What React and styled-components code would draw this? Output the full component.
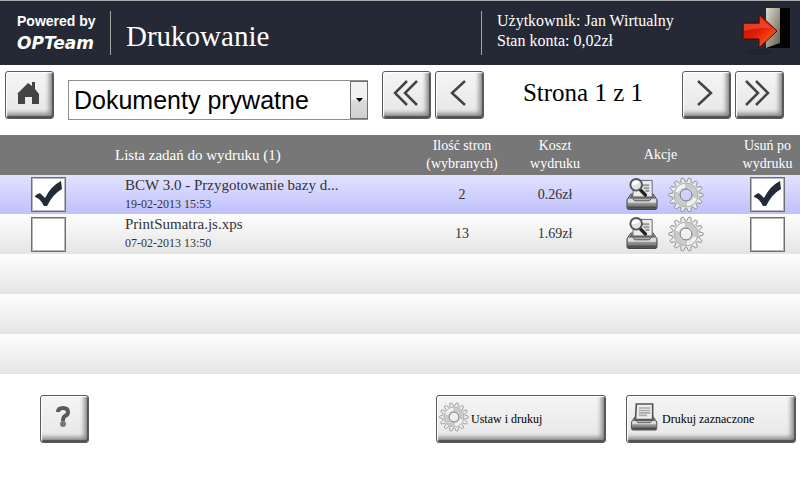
import React, { useState } from "react";
import styled, { createGlobalStyle, css } from "styled-components";

const GlobalStyle = createGlobalStyle`
	* {
		box-sizing: border-box;
	}
	body {
		margin: 0;
		background: #fff;
		color: #000;
		font-family: "Liberation Serif", "Times New Roman", serif;
	}
	button, select {
		font-family: inherit;
		cursor: pointer;
	}
	svg {
		display: block;
	}
`;

const Page = styled.main`
	margin-right: 1px;
`;

const TopBar = styled.header`
	display: flex;
	align-items: center;
	height: 65px;
	padding: 0 8px 0 17px;
	border-top: 1px solid #a9aaac;
	background: #252936;
	color: #fff;
`;

const Brand = styled.div`
	width: 94px;
	height: 44px;
	padding-top: 2px;
	border-right: 1px solid #a5a7a4;
	font: bold 14px/16px "Liberation Sans", Arial, sans-serif;
	white-space: nowrap;
	strong {
		display: block;
		margin-top: 4px;
		font: italic bold 17px/20px "DejaVu Sans", Verdana, sans-serif;
	}
`;

const Title = styled.h1`
	flex: 1;
	margin: 0;
	padding: 6px 0 0 15px;
	font-size: 29px;
	line-height: 32px;
	font-weight: normal;
`;

const Account = styled.div`
	width: 261px;
	height: 44px;
	padding-left: 15px;
	border-left: 1px solid #a5a7a4;
	font-size: 16px;
	line-height: 20px;
`;

const IconButton = styled.button`
	display: flex;
	padding: 0;
	border: 0;
	background: none;
`;

const Toolbar = styled.div`
	display: flex;
	gap: 14px;
	height: 70px;
	padding: 6px 16px 0 5px;
`;

const BevelButton = styled.button`
	display: flex;
	align-items: center;
	justify-content: center;
	width: 49px;
	height: 48px;
	padding: 0 3px 4px 0;
	border: 1px solid #5a5a5a;
	border-radius: 3px;
	background: linear-gradient(#f5f5f5, #e6e6e6);
	box-shadow: inset 1px 1px 1px #fff, inset -1px -2px 1px #505050, inset -4px -5px 4px #909090;
	color: #444;
	${props => props.$wide && css`
		justify-content: flex-start;
		gap: 2px;
		width: 170px;
		padding-left: 2px;
		color: #000;
		font-size: 12px;
		span {
			padding-top: 4px;
		}
	`}
`;

const SelectBox = styled.div`
	position: relative;
	width: 300px;
	height: 40px;
	margin-top: 9px;
	select {
		appearance: none;
		width: 100%;
		height: 100%;
		padding: 0 20px 0 5px;
		border: 1px solid #8e8f8f;
		border-radius: 0;
		background: #fff;
		color: #000;
		font: 25px "Liberation Sans", Arial, sans-serif;
	}
`;

const SelectArrow = styled.span`
	position: absolute;
	top: 1px;
	right: 0;
	bottom: 1px;
	display: flex;
	align-items: center;
	justify-content: center;
	width: 18px;
	border: 1px solid #707070;
	background: linear-gradient(#f2f2f2 50%, #dcdcdc 50%, #d0d0d0);
	pointer-events: none;
`;

const Pager = styled.nav`
	display: flex;
	flex: 1;
	gap: 4px;
`;

const PageLabel = styled.span`
	flex: 1;
	padding-top: 8px;
	font-size: 25px;
	line-height: 28px;
	text-align: center;
	white-space: nowrap;
`;

const JobTable = styled.table`
	width: 100%;
	table-layout: fixed;
	border-collapse: collapse;
	font-size: 14px;
`;

const HeadCell = styled.th`
	width: ${props => props.$width || "auto"};
	height: 40px;
	padding: 0 0 0 ${props => props.$indent || "0"};
	background: #777;
	color: #fff;
	font-size: ${props => props.$indent ? "15px" : "14px"};
	font-weight: normal;
	line-height: 18px;
	text-align: ${props => props.$indent ? "left" : "center"};
`;

const Row = styled.tr`
	height: 40px;
	background: linear-gradient(#fefefe, #e4e4e4);
	color: #333;
	${props => props.$selected && css`
		height: 39px;
		background: linear-gradient(#e2e2ff, #c0c0fd);
	`}
`;

const Cell = styled.td`
	padding: 0;
	text-align: center;
`;

const NameCell = styled(Cell)`
	padding-left: 29px;
	font-size: 15px;
	line-height: 18px;
	text-align: left;
	white-space: nowrap;
	small {
		display: block;
		font-size: 12px;
		line-height: 20px;
	}
`;

const Actions = styled.div`
	display: flex;
	justify-content: center;
	gap: 10px;
	padding-left: 8px;
`;

const Tick = styled.label`
	position: relative;
	display: block;
	width: 35px;
	height: 35px;
	margin: 0 auto;
	input {
		appearance: none;
		display: block;
		width: 100%;
		height: 100%;
		margin: 0;
		border: 1px solid #6f6f6f;
		outline: 1px solid #b8b8b8;
		outline-offset: -2px;
		background: #fff;
	}
	svg {
		position: absolute;
		inset: 0;
		pointer-events: none;
	}
`;

const BottomBar = styled.footer`
	display: flex;
	gap: 20px;
	padding: 21px 4px 0 40px;
	button:first-child {
		margin-right: auto;
	}
`;

const TEETH = 14;

// knobbed teeth on a ring
const gearPath = () => {
	const points = [];
	for (let i = 0; i < 224; i++) {
		const angle = (i / 224) * Math.PI * 2;
		const wave = Math.cos(angle * TEETH) * 3.2;
		const r = 15.2 + Math.max(-1.8, Math.min(2, wave));
		points.push(`${(18 + r * Math.cos(angle)).toFixed(2)} ${(18 + r * Math.sin(angle)).toFixed(2)}`);
	}
	return `M${points.join("L")}Z`;
};

const GEAR = gearPath();

const GearIcon = ({ size = 36 }) => (
	<svg width={size} height={size} viewBox="0 0 36 36" aria-hidden="true">
		<path d={`${GEAR}M24 18a6 6 0 1 0-12 0a6 6 0 1 0 12 0Z`} fill="#ececec" fillRule="evenodd" stroke="#8a8a8a" />
		<circle cx="18" cy="18" r="9.5" fill="none" stroke="#cacaca" strokeWidth="5" />
		<path d="M9 15a9.5 9.5 0 0 1 8-6.500M27 21a9.500 9.500 0 0 1-8 6.500" fill="none" stroke="#f2f2f2" strokeWidth="4" />
		<circle cx="18" cy="18" r="12" fill="none" stroke="#b0b0b0" />
		<circle cx="18" cy="18" r="6" fill="none" stroke="#8a8a8a" />
	</svg>
);

const PrinterBase = () => (
	<>
		<defs>
			<linearGradient id="tray" x1="0" y1="0" x2="0" y2="1">
				<stop offset="0" stopColor="#c8c8c8" />
				<stop offset="0.5" stopColor="#a6a6a6" />
				<stop offset="1" stopColor="#5a5a5a" />
			</linearGradient>
		</defs>
		<path d="M5 17h23l4 6v8q0 2-2 2H3q-2 0-2-2v-8Z" fill="url(#tray)" stroke="#444" />
		<path d="M5 18h23l2 4H3Z" fill="#6a6a6a" />
		<path d="M2 23q0-1 2-1h3l2 2h15l2-2h4q1 0 1 1v3H2Z" fill="#dcdcdc" />
		<path d="M7 22l2 2h15l2-2" stroke="#555" fill="none" />
		<path d="M2 31h29" stroke="#4c4c4c" strokeWidth="2" />
	</>
);

const PreviewIcon = () => (
	<svg width="32" height="34" viewBox="0 0 33 34" aria-hidden="true">
		<PrinterBase />
		<path d="M8 3h19v17H7Z" fill="#ebebeb" stroke="#666" />
		<path d="M17 8h7M18 11h6M20 14h4" stroke="#999" strokeWidth="2" />
		<path d="M14 12l6 6" stroke="#222" strokeWidth="3.500" strokeLinecap="round" />
		<circle cx="10.500" cy="7.500" r="6" fill="#dfe3e3" stroke="#555" strokeWidth="2" />
		<path d="M6 8a4.500 4.500 0 0 1 8-3q-2 3-8 3Z" fill="#fff" />
	</svg>
);

const PrintIcon = () => (
	<svg width="31" height="28" viewBox="-2 0 38 34" aria-hidden="true">
		<PrinterBase />
		<path d="M7 1h20v19H6Z" fill="#eee" stroke="#555" strokeWidth="2" />
		<path d="M10 6h14M10 9h14M10 12h14M10 15h10" stroke="#aaa" strokeWidth="2" />
	</svg>
);

const HomeIcon = () => (
	<svg width="24" height="24" viewBox="0 0 24 24" aria-hidden="true">
		<path d="M1 13L12 2l4 3V1h3v7l4 5v10h-7v-7H9v7H2V13Z" fill="#444" />
	</svg>
);

const ExitIcon = () => (
	<svg width="50" height="50" viewBox="0 2 50 50" aria-hidden="true">
		<defs>
			<linearGradient id="door" x1="0" y1="0" x2="1" y2="1">
				<stop offset="0" stopColor="#e0dcd0" />
				<stop offset="1" stopColor="#625c4e" />
			</linearGradient>
			<linearGradient id="arrow" x1="0" y1="0" x2="1" y2="1">
				<stop offset="0" stopColor="#a80f05" />
				<stop offset="0.5" stopColor="#e52009" />
				<stop offset="1" stopColor="#ff7a1c" />
			</linearGradient>
		</defs>
		<ellipse cx="17" cy="46" rx="14" ry="3" fill="#1f2330" />
		<path d="M24 2h24v40H24Z" fill="#030303" />
		<path d="M24 2h14v35l-14 5Z" fill="url(#door)" />
		<path d="M1 17h16V8l18 17-18 17v-9H1Z" fill="url(#arrow)" stroke="#4b0804" />
		<path d="M2 18h16v-7l11 11q-14-1-27 3Z" fill="#ff6b50" opacity="0.45" />
	</svg>
);

const Chevrons = ({ double, right }) => (
	<svg width="28" height="28" viewBox="0 0 28 28" fill="none" stroke="#444" strokeWidth="2.500" aria-hidden="true">
		<g transform={right ? "translate(28 0) scale(-1 1)" : undefined}>
			<path d={double ? "M16 2L4 14l12 12M26 2L14 14l12 12" : "M21 2L8 14l13 12"} />
		</g>
	</svg>
);

const HelpIcon = () => (
	<svg width="14" height="22" viewBox="0 0 14 22" aria-hidden="true">
		<path d="M2 6q0-4 5-4t5 4q0 3-3 4-2 1-2 5" fill="none" stroke="#5a5a5a" strokeWidth="4" />
		<circle cx="7" cy="18" r="3" fill="#777" />
	</svg>
);

const CheckBox = ({ label, defaultChecked }) => {
	const [checked, setChecked] = useState(defaultChecked);

	return (
		<Tick>
			<input type="checkbox" aria-label={label} checked={checked} onChange={() => setChecked(!checked)} />
			{checked && (
				<svg width="35" height="35" viewBox="0 0 35 35" aria-hidden="true">
					<path d="M4 19q4-4 6-2l4 4Q20 9 30 4l1 8q-9 5-15 17h-3Q9 21 4 20Z" fill="#232a38" />
				</svg>
			)}
		</Tick>
	);
};

const jobs = [
	{ name: "BCW 3.0 - Przygotowanie bazy d...", date: "19-02-2013 15:53", pages: 2, cost: "0.26zł", selected: true },
	{ name: "PrintSumatra.js.xps", date: "07-02-2013 13:50", pages: 13, cost: "1.69zł", selected: false },
];

const App = () => (
	<>
		<GlobalStyle />
		<Page>
			<TopBar>
				<Brand>Powered by<strong>OPTeam</strong></Brand>
				<Title>Drukowanie</Title>
				<Account>
					<div>Użytkownik: Jan Wirtualny</div>
					<div>Stan konta: 0,02zł</div>
				</Account>
				<IconButton aria-label="Wyloguj"><ExitIcon /></IconButton>
			</TopBar>
			<Toolbar>
				<BevelButton aria-label="Start"><HomeIcon /></BevelButton>
				<SelectBox>
					<select aria-label="Dokumenty">
						<option>Dokumenty prywatne</option>
					</select>
					<SelectArrow>
						<svg width="7" height="4" viewBox="0 0 7 4"><path d="M0 0h7L3.5 4Z" /></svg>
					</SelectArrow>
				</SelectBox>
				<Pager>
					<BevelButton aria-label="Pierwsza"><Chevrons double /></BevelButton>
					<BevelButton aria-label="Poprzednia"><Chevrons /></BevelButton>
					<PageLabel>Strona 1 z 1</PageLabel>
					<BevelButton aria-label="Następna"><Chevrons right /></BevelButton>
					<BevelButton aria-label="Ostatnia"><Chevrons double right /></BevelButton>
				</Pager>
			</Toolbar>
			<JobTable>
				<thead>
					<tr>
						<HeadCell $width="96px" />
						<HeadCell $indent="19px">Lista zadań do wydruku (1)</HeadCell>
						<HeadCell $width="124px">Ilość stron<br />(wybranych)</HeadCell>
						<HeadCell $width="62px">Koszt<br />wydruku</HeadCell>
						<HeadCell $width="149px">Akcje</HeadCell>
						<HeadCell $width="65px">Usuń po<br />wydruku</HeadCell>
					</tr>
				</thead>
				<tbody>
					{jobs.map((job) => (
						<Row key={job.name} $selected={job.selected}>
							<Cell><CheckBox label={job.name} defaultChecked={job.selected} /></Cell>
							<NameCell>{job.name}<small>{job.date}</small></NameCell>
							<Cell>{job.pages}</Cell>
							<Cell>{job.cost}</Cell>
							<Cell>
								<Actions>
									<IconButton aria-label="Podgląd"><PreviewIcon /></IconButton>
									<IconButton aria-label="Ustawienia"><GearIcon /></IconButton>
								</Actions>
							</Cell>
							<Cell><CheckBox label="Usuń po wydruku" defaultChecked={job.selected} /></Cell>
						</Row>
					))}
					{[1, 2, 3].map((n) => (
						<Row key={n}><Cell colSpan={6} /></Row>
					))}
				</tbody>
			</JobTable>
			<BottomBar>
				<BevelButton aria-label="Pomoc"><HelpIcon /></BevelButton>
				<BevelButton $wide><GearIcon size={30} /><span>Ustaw i drukuj</span></BevelButton>
				<BevelButton $wide><PrintIcon /><span>Drukuj zaznaczone</span></BevelButton>
			</BottomBar>
		</Page>
	</>
);

export default App;
